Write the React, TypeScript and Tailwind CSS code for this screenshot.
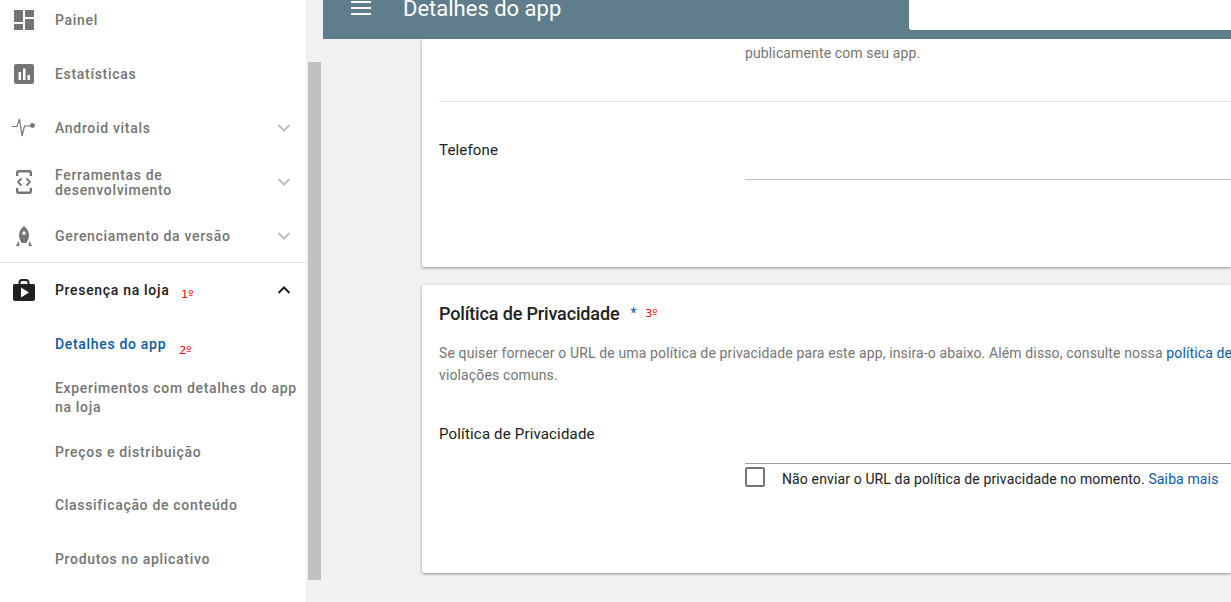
import type { ReactNode } from 'react'

function Chevron({ up }: { up?: boolean }) {
  return (
    <svg width="14" height="9" viewBox="0 0 14 9" fill="none" stroke={up ? '#212121' : '#bdbdbd'} strokeWidth="2" className="absolute left-[277px] top-1/2 -translate-y-1/2">
      <path d={up ? 'M1.5 7.5L7 2l5.5 5.5' : 'M1.5 1.5L7 7l5.5-5.5'} />
    </svg>
  )
}

const iconDashboard = (
  <svg width="20" height="20" viewBox="0 0 20 20" fill="#757575">
    <path d="M0 0h9v12H0zM0 14h9v6H0zM11 0h9v7h-9zM11 9h9v11h-9z" />
  </svg>
)

const iconStats = (
  <svg width="20" height="20" viewBox="0 0 20 20">
    <rect width="20" height="20" rx="2" fill="#757575" />
    <path d="M4.500 8h2.500v8H4.500zM9 4.500h2.500V16H9zM13.500 11H16v5h-2.500z" fill="#fff" />
  </svg>
)

const iconVitals = (
  <svg width="24" height="20" viewBox="0 0 24 20" fill="none" stroke="#757575" strokeWidth="1.2">
    <path d="M0 8.500h5L7.500 1l2.500 17 2.500-10h7" />
    <circle cx="20.500" cy="7.500" r="2.400" fill="#757575" stroke="none" />
  </svg>
)

const iconDev = (
  <svg width="16" height="24" viewBox="0 0 16 24" fill="none">
    <path d="M1.200 6V2.500A1.500 1.500 0 0 1 2.700 1.200h10.600a1.500 1.500 0 0 1 1.500 1.300V6M1.200 18v3.500a1.500 1.500 0 0 0 1.500 1.300h10.600a1.500 1.500 0 0 0 1.500-1.300V18" stroke="#757575" strokeWidth="2.400" />
    <path d="M5.500 8.500L2 12l3.500 3.500M10.500 8.500L14 12l-3.500 3.500" stroke="#757575" strokeWidth="1.800" />
  </svg>
)

const iconRocket = (
  <svg width="16" height="20" viewBox="0 0 16 20" fill="#757575">
    <path d="M8 0c3.500 3 5 6 5 9 0 3-1.500 6-2.500 8h-5C4.500 15 3 12 3 9c0-3 1.500-6 5-9z" />
    <circle cx="8" cy="7" r="1.700" fill="#fff" />
    <path d="M2.500 15l1 5H0zM13.500 15l-1 5H16z" />
  </svg>
)

const iconStore = (
  <svg width="22" height="22" viewBox="0 0 22 22">
    <path d="M1.500 5h19A1.500 1.500 0 0 1 22 6.500V20a2 2 0 0 1-2 2H2a2 2 0 0 1-2-2V6.500A1.500 1.500 0 0 1 1.500 5z" fill="#212121" />
    <path d="M6.500 6V3.500A2.500 2.500 0 0 1 9 1h4a2.500 2.500 0 0 1 2.500 2.500V6" fill="none" stroke="#212121" strokeWidth="2" />
    <path d="M8 8.500l8 5-8 5z" fill="#fff" />
  </svg>
)

function NavItem({ icon, children, chevron }: { icon: ReactNode; children: ReactNode; chevron?: boolean }) {
  return (
    <div className="relative h-[54px] flex items-center pl-[55px] text-[#757575]">
      <span className="absolute left-0 w-[47px] flex justify-center">{icon}</span>
      <span>{children}</span>
      {chevron && <Chevron />}
    </div>
  )
}

function SubItem({ children }: { children: ReactNode }) {
  return <div className="h-[54px] flex items-center pl-[55px] pr-2 text-[#757575] leading-[19px]">{children}</div>
}

function Mark({ children, className }: { children: ReactNode; className?: string }) {
  return <span className={`font-['DejaVu_Sans',sans-serif] text-[11px] font-normal text-[#ff0000] tracking-normal ${className ?? ''}`}>{children}</span>
}

export default function App() {
  return (
    <div className="flex h-[602px] w-[1231px] overflow-hidden bg-[#f1f1f1] font-['Roboto',sans-serif] text-[14px] tracking-[0.13px]">
      {/* Sidebar */}
      <aside className="w-[306px] shrink-0 bg-white font-medium tracking-[0.68px]">
        <div className="-mt-[7px]">
          <NavItem icon={iconDashboard}>Painel</NavItem>
          <NavItem icon={iconStats}>Estatísticas</NavItem>
          <NavItem icon={iconVitals} chevron>Android vitals</NavItem>
          <NavItem icon={iconDev} chevron>
            <span className="block leading-[15px] mt-[1px]">Ferramentas de<br />desenvolvimento</span>
          </NavItem>
          <NavItem icon={iconRocket} chevron>Gerenciamento da versão</NavItem>
          <div className="-mt-[1px] border-t border-[#e0e0e0]" />
          <div className="relative h-[54px] flex items-center pl-[55px] text-[#212121]">
            <span className="absolute left-0 w-[47px] flex justify-center">{iconStore}</span>
            <span>Presença na loja</span>
            <Mark className="ml-[12px] mt-[11px]">1º</Mark>
            <Chevron up />
          </div>
          <div className="h-[54px] flex items-center pl-[55px] text-[#0d5ba5]">
            <span>Detalhes do app</span>
            <Mark className="ml-[13px] mt-[14px]">2º</Mark>
          </div>
          <SubItem>Experimentos com detalhes do app na loja</SubItem>
          <SubItem>Preços e distribuição</SubItem>
          <div className="-mt-[1px]">
            <SubItem>Classificação de conteúdo</SubItem>
            <SubItem>Produtos no aplicativo</SubItem>
          </div>
        </div>
      </aside>

      {/* Scrollbar */}
      <div className="w-[17px] shrink-0 bg-[#f1f1f1] pt-[62px] pl-[2px]">
        <div className="h-[518px] w-[13px] bg-[#c1c1c1]" />
      </div>

      {/* Main */}
      <div className="flex-1 min-w-0 flex flex-col">
        <header className="h-[39px] shrink-0 bg-[#607d8b] flex items-start text-white">
          <div className="flex items-center h-[16px] pl-[28px]">
            <svg width="20" height="14" viewBox="0 0 20 14" fill="#fff">
              <path d="M0 0h20v2H0zM0 6h20v2H0zM0 12h20v2H0z" />
            </svg>
            <span className="ml-[32px] text-[22px] font-normal tracking-normal whitespace-nowrap">Detalhes do app</span>
          </div>
          <div className="ml-auto h-[30px] w-[322px] bg-white rounded-bl-[3px]" />
        </header>

        <div className="pl-[99px] flex flex-col gap-[18px]">
          {/* Contact card */}
          <section className="h-[228px] bg-white rounded-bl-[2px] shadow-[0_1px_3px_rgba(0,0,0,0.4)] pl-[17px] overflow-hidden">
            <div className="h-[63px] border-b border-[#e0e0e0] pl-[306px] text-[#757575] whitespace-nowrap pt-[4px]">
              publicamente com seu app.
            </div>
            <div className="flex">
              <div className="w-[306px] pt-[37px] text-[15px] tracking-[0.15px] text-[#212121]">Telefone</div>
              <div className="flex-1 h-[78px] border-b border-[#bdbdbd]" />
            </div>
          </section>

          {/* Privacy card */}
          <section className="h-[288px] bg-white rounded-l-[2px] shadow-[0_1px_3px_rgba(0,0,0,0.4)] pl-[17px] overflow-hidden">
            <h2 className="mt-[18px] h-[21px] flex items-center text-[18px] font-medium tracking-[-0.15px] text-[#212121] whitespace-nowrap">
              Política de Privacidade
              <span className="ml-[11px] text-[14px] font-normal text-[#0d5ba5]">*</span>
              <Mark className="ml-[9px] mt-[2px]">3º</Mark>
            </h2>
            <p className="mt-[18px] text-[#757575] leading-[22px] whitespace-nowrap">
              Se quiser fornecer o URL de uma política de privacidade para este app, insira-o abaixo. Além disso, consulte nossa <span className="text-[#0d5ba5]">política de</span>
              <br />
              violações comuns.
            </p>
            <div className="mt-[26px] flex">
              <div className="w-[306px] pt-[11px] text-[15px] tracking-[0.17px] text-[#212121]">Política de Privacidade</div>
              <div className="flex-1 min-w-0">
                <div className="h-[52px] border-b border-[#9e9e9e]" />
                <div className="mt-[3px] flex items-start whitespace-nowrap">
                  <span className="size-[20px] rounded-[2px] border-2 border-[#757575]" />
                  <span className="ml-[17px] pt-[2px] text-[#212121]">
                    Não enviar o URL da política de privacidade no momento. <span className="text-[#0d5ba5]">Saiba mais</span>
                  </span>
                </div>
              </div>
            </div>
          </section>
        </div>
      </div>
    </div>
  )
}
